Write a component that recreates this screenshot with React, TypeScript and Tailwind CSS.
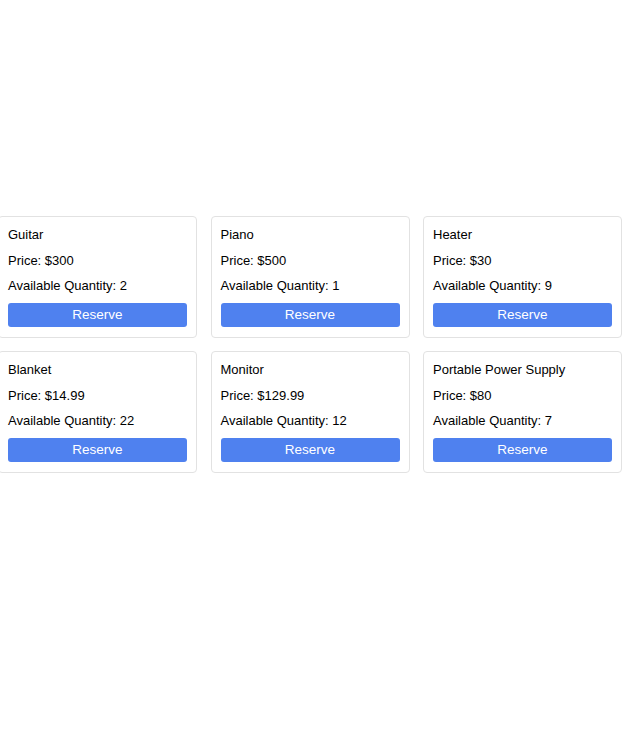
const items = [
  { name: 'Guitar', price: '$300', qty: 2 },
  { name: 'Piano', price: '$500', qty: 1 },
  { name: 'Heater', price: '$30', qty: 9 },
  { name: 'Blanket', price: '$14.99', qty: 22 },
  { name: 'Monitor', price: '$129.99', qty: 12 },
  { name: 'Portable Power Supply', price: '$80', qty: 7 },
];

function ItemCard({ name, price, qty }: { name: string; price: string; qty: number }) {
  return (
    <div className="flex flex-col rounded-[4px] border border-[#e2e2e2] bg-white px-[9px] pb-[10px] pt-[10px]">
      <p className="leading-[16px]">{name}</p>
      <p className="mt-[10px] leading-[16px]">Price: {price}</p>
      <p className="mt-[9px] leading-[16px]">Available Quantity: {qty}</p>
      <button className="mt-[9px] h-[24px] w-full rounded-[3px] bg-[#4f81ef] text-[13.5px] leading-[24px] text-white">
        Reserve
      </button>
    </div>
  );
}

export default function App() {
  return (
    <div
      className="flex h-[729px] w-[629px] items-center overflow-hidden bg-white text-[13px] text-[#000]"
      style={{ fontFamily: '"Liberation Sans", Arial, sans-serif' }}
    >
      <div className="-ml-[2px] mt-[-40px] grid grid-cols-[199px_199px_199px] gap-x-[13.5px] gap-y-[13.5px]">
        {items.map((item) => (
          <ItemCard key={item.name} {...item} />
        ))}
      </div>
    </div>
  );
}
